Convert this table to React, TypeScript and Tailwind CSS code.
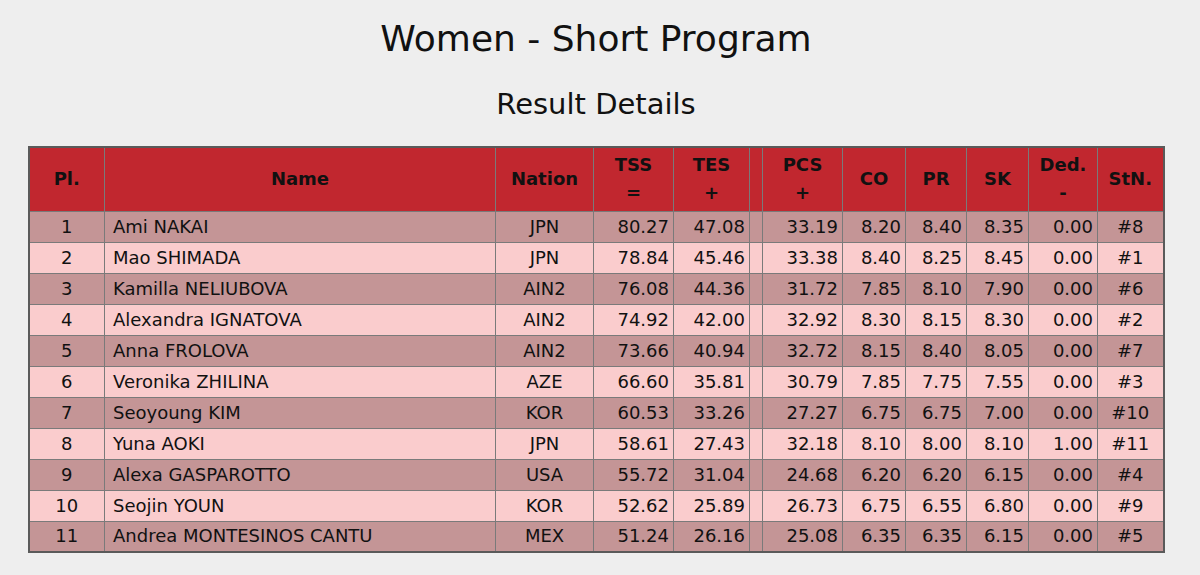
import React from "react";

type Row = [string, string, string, string, string, string, string, string, string, string, string];

const rows: Row[] = [
  ["1", "Ami NAKAI", "JPN", "80.27", "47.08", "33.19", "8.20", "8.40", "8.35", "0.00", "#8"],
  ["2", "Mao SHIMADA", "JPN", "78.84", "45.46", "33.38", "8.40", "8.25", "8.45", "0.00", "#1"],
  ["3", "Kamilla NELIUBOVA", "AIN2", "76.08", "44.36", "31.72", "7.85", "8.10", "7.90", "0.00", "#6"],
  ["4", "Alexandra IGNATOVA", "AIN2", "74.92", "42.00", "32.92", "8.30", "8.15", "8.30", "0.00", "#2"],
  ["5", "Anna FROLOVA", "AIN2", "73.66", "40.94", "32.72", "8.15", "8.40", "8.05", "0.00", "#7"],
  ["6", "Veronika ZHILINA", "AZE", "66.60", "35.81", "30.79", "7.85", "7.75", "7.55", "0.00", "#3"],
  ["7", "Seoyoung KIM", "KOR", "60.53", "33.26", "27.27", "6.75", "6.75", "7.00", "0.00", "#10"],
  ["8", "Yuna AOKI", "JPN", "58.61", "27.43", "32.18", "8.10", "8.00", "8.10", "1.00", "#11"],
  ["9", "Alexa GASPAROTTO", "USA", "55.72", "31.04", "24.68", "6.20", "6.20", "6.15", "0.00", "#4"],
  ["10", "Seojin YOUN", "KOR", "52.62", "25.89", "26.73", "6.75", "6.55", "6.80", "0.00", "#9"],
  ["11", "Andrea MONTESINOS CANTU", "MEX", "51.24", "26.16", "25.08", "6.35", "6.35", "6.15", "0.00", "#5"],
];

const th = "border border-[#7a7a7a] bg-[#c1272f] font-bold text-[18px] leading-[28px] text-center align-middle p-0";
const td = "border border-[#7a7a7a] h-[31px] p-0 text-[18px] leading-[22px] align-middle";

export default function App() {
  return (
    <div
      className="min-h-[575px] w-full bg-[#eeeeee] text-[#111111]"
      style={{ fontFamily: '"DejaVu Sans", Verdana, sans-serif' }}
    >
      <div className="w-[1192px] flex flex-col items-center pt-[17px]">
        <h1 className="text-[36px] leading-[43px] font-normal">Women - Short Program</h1>
        <h2 className="mt-[27px] text-[29px] leading-[35px] font-normal">Result Details</h2>
        <table className="mt-[24px] w-[1135px] table-fixed border-collapse border-2 border-[#5a5a5a]">
          <colgroup>
            <col className="w-[76px]" />
            <col className="w-[391px]" />
            <col className="w-[98px]" />
            <col className="w-[80px]" />
            <col className="w-[76px]" />
            <col className="w-[13px]" />
            <col className="w-[80px]" />
            <col className="w-[63px]" />
            <col className="w-[61px]" />
            <col className="w-[62px]" />
            <col className="w-[69px]" />
            <col className="w-[66px]" />
          </colgroup>
          <thead>
            <tr className="h-[64px]">
              <th className={th}>Pl.</th>
              <th className={th}>Name</th>
              <th className={th}>Nation</th>
              <th className={th}>
                TSS
                <br />=
              </th>
              <th className={th}>
                TES
                <br />+
              </th>
              <th className={th}></th>
              <th className={th}>
                PCS
                <br />+
              </th>
              <th className={th}>CO</th>
              <th className={th}>PR</th>
              <th className={th}>SK</th>
              <th className={th}>
                Ded.
                <br />-
              </th>
              <th className={th}>StN.</th>
            </tr>
          </thead>
          <tbody>
            {rows.map((r, i) => (
              <tr key={i} className={i % 2 === 0 ? "bg-[#c49596]" : "bg-[#facccd]"}>
                <td className={`${td} text-center`}>{r[0]}</td>
                <td className={`${td} text-left pl-[8px] whitespace-nowrap`}>{r[1]}</td>
                <td className={`${td} text-center`}>{r[2]}</td>
                <td className={`${td} text-right pr-[4px]`}>{r[3]}</td>
                <td className={`${td} text-right pr-[4px]`}>{r[4]}</td>
                <td className={td}></td>
                <td className={`${td} text-right pr-[4px]`}>{r[5]}</td>
                <td className={`${td} text-right pr-[4px]`}>{r[6]}</td>
                <td className={`${td} text-right pr-[4px]`}>{r[7]}</td>
                <td className={`${td} text-right pr-[4px]`}>{r[8]}</td>
                <td className={`${td} text-right pr-[4px]`}>{r[9]}</td>
                <td className={`${td} text-center`}>{r[10]}</td>
              </tr>
            ))}
          </tbody>
        </table>
      </div>
    </div>
  );
}
